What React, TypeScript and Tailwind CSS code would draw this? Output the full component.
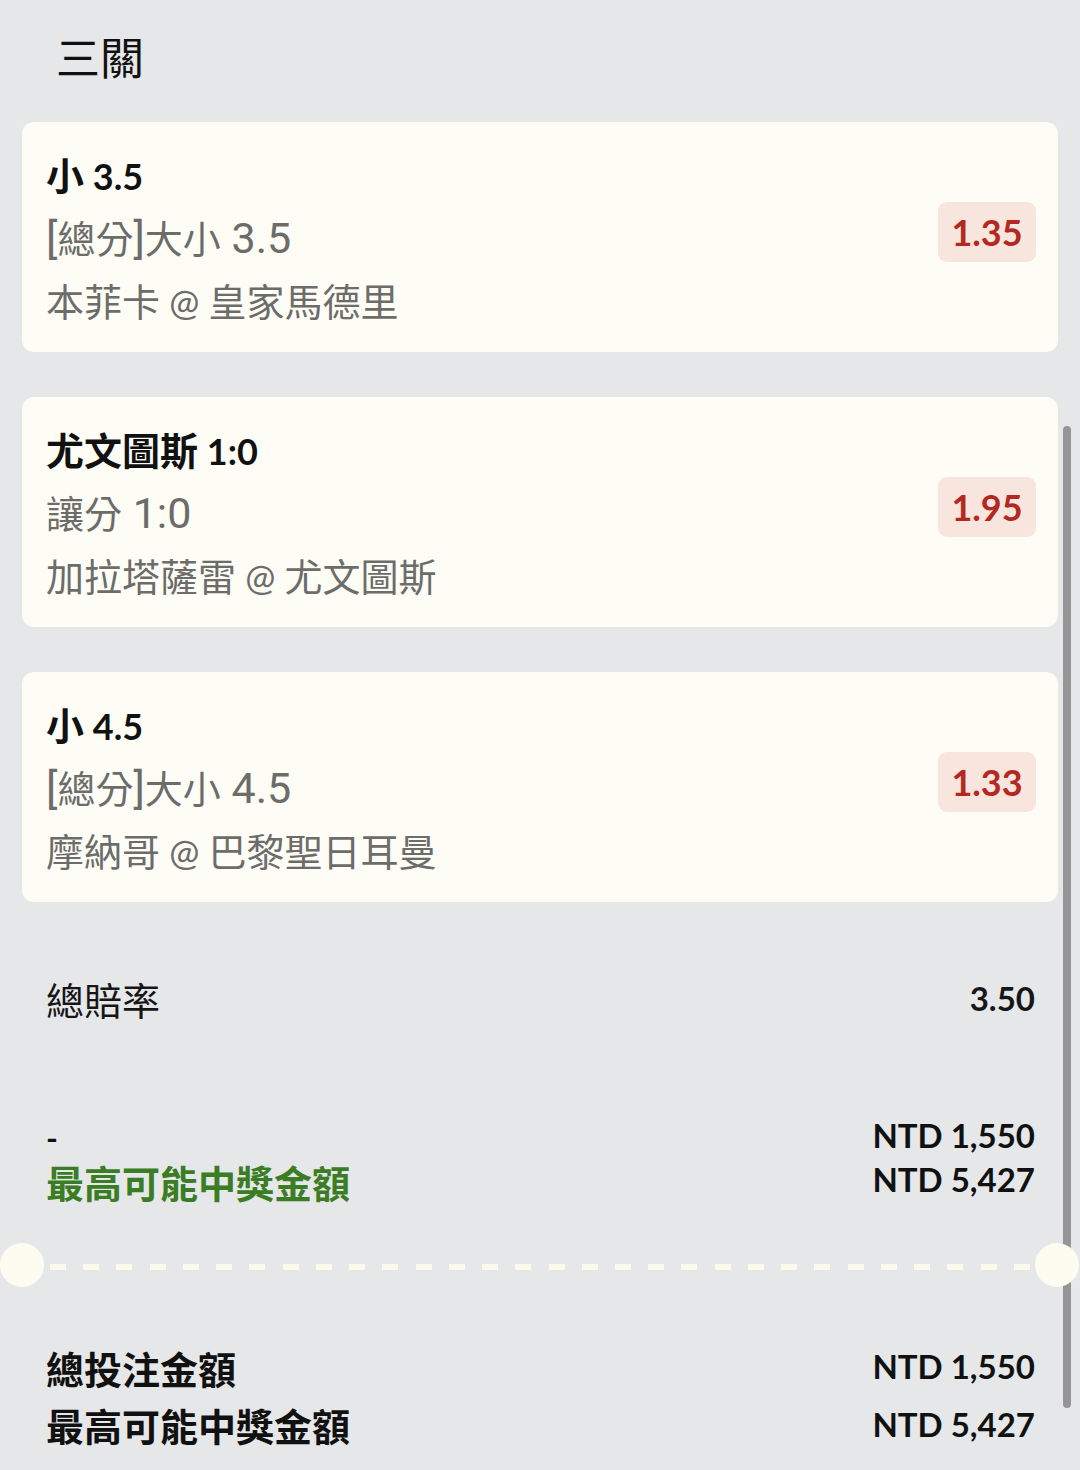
import React from "react";

const FONT = "font-['Lato','Noto_Sans_CJK_TC',sans-serif]";
const CJK_RE = /[\u3000-\u9fff\uff00-\uffef]/;

type Bet = { title: string; market: string; match: string; odds: string };

const bets: Bet[] = [
  { title: "小 3.5", market: "[總分]大小 3.5", match: "本菲卡 @ 皇家馬德里", odds: "1.35" },
  { title: "尤文圖斯 1:0", market: "讓分 1:0", match: "加拉塔薩雷 @ 尤文圖斯", odds: "1.95" },
  { title: "小 4.5", market: "[總分]大小 4.5", match: "摩納哥 @ 巴黎聖日耳曼", odds: "1.33" },
];

type Kind = "cjk" | "lat" | "rob";

function classify(text: string, sub: boolean): { kind: Kind; t: string }[] {
  const out: { kind: Kind; t: string }[] = [];
  const chars = Array.from(text);
  chars.forEach((ch, i) => {
    let kind: Kind;
    if (CJK_RE.test(ch)) kind = "cjk";
    else if (!sub) kind = "lat";
    else if (/[0-9.:\[\]]/.test(ch)) kind = "rob";
    else if (ch === " " && i + 1 < chars.length && /[0-9]/.test(chars[i + 1])) kind = "rob";
    else kind = "lat";
    const last = out[out.length - 1];
    if (last && last.kind === kind) last.t += ch;
    else out.push({ kind, t: ch });
  });
  return out;
}

function Mixed({ text, sub = false }: { text: string; sub?: boolean }) {
  return (
    <>
      {classify(text, sub).map((p, i) =>
        p.kind === "cjk" ? (
          <span key={i} className="font-['Noto_Sans_CJK_TC',sans-serif] text-[38px]">
            {p.t}
          </span>
        ) : p.kind === "rob" ? (
          <span key={i} className="font-['Roboto',sans-serif] text-[43px]">
            {p.t}
          </span>
        ) : (
          <span key={i} className="whitespace-pre">{p.t}</span>
        )
      )}
    </>
  );
}

function BetCard({ bet }: { bet: Bet }) {
  return (
    <div className="flex items-center justify-between rounded-[12px] bg-[#fdfdf5] pl-[24px] pr-[22px] pt-[20px] pb-[21px]">
      <div className="flex flex-col">
        <div className={`${FONT} h-[63px] text-[36px] leading-[63px] font-bold text-[#111111]`}>
          <Mixed text={bet.title} />
        </div>
        <div className={`${FONT} h-[63px] text-[36px] leading-[63px] text-[#6c6c6a]`}>
          <Mixed text={bet.market} sub />
        </div>
        <div className={`${FONT} h-[63px] text-[36px] leading-[63px] text-[#6c6c6a]`}>
          <Mixed text={bet.match} sub />
        </div>
      </div>
      <div className={`${FONT} mb-[10px] flex h-[60px] w-[98px] items-center justify-center rounded-[9px] bg-[#f7e5de] text-[36px] font-bold text-[#b3281f]`}>
        {bet.odds}
      </div>
    </div>
  );
}

export default function App() {
  const dashes = Array.from({ length: 30 }, (_, i) => i);
  return (
    <div className="relative h-[1470px] w-[1080px] overflow-hidden bg-[#e6e7e9]">
      <div className="h-[122px] pl-[56px] pt-[26px] font-['Noto_Sans_CJK_TC',sans-serif] text-[44px] leading-[60px] text-[#111111]">
        三關
      </div>

      <div className="flex flex-col gap-[45px] px-[22px]">
        {bets.map((b) => (
          <BetCard key={b.odds} bet={b} />
        ))}
      </div>

      <div className="mt-[71px] flex h-[50px] items-center justify-between pl-[46px] pr-[45px]">
        <span className="font-['Noto_Sans_CJK_TC',sans-serif] text-[38px] text-[#161616]">總賠率</span>
        <span className={`${FONT} mt-[2px] text-[33px] font-bold text-[#161616]`}>3.50</span>
      </div>

      <div className="mt-[91px] flex flex-col pl-[46px] pr-[45px]">
        <div className="flex h-[44px] items-center justify-between">
          <span className={`${FONT} mt-[4px] text-[32px] font-bold text-[#111111]`}>-</span>
          <span className={`${FONT} text-[33px] font-bold text-[#111111]`}>NTD 1,550</span>
        </div>
        <div className="flex h-[44px] items-center justify-between">
          <span className="mt-[2px] font-['Noto_Sans_CJK_TC',sans-serif] text-[38px] font-bold text-[#3b7d24]">最高可能中獎金額</span>
          <span className={`${FONT} text-[33px] font-bold text-[#111111]`}>NTD 5,427</span>
        </div>
      </div>

      <div className="relative mt-[41px] flex h-[44px] items-center">
        <div className="absolute left-0 top-0 z-10 h-[44px] w-[44px] rounded-full bg-[#fdfcf0]" />
        <div className="flex w-full items-center justify-between pl-[50px] pr-[50px]">
          {dashes.map((i) => (
            <span key={i} className="mt-[4px] h-[6px] w-[16px] bg-[#fcfaec]" />
          ))}
        </div>
        <div className="absolute left-[1035px] top-0 z-10 h-[44px] w-[44px] rounded-full bg-[#fdfcf0]" />
      </div>

      <div className="mt-[51px] flex flex-col pl-[46px] pr-[45px]">
        <div className="flex h-[58px] items-center justify-between">
          <span className="font-['Noto_Sans_CJK_TC',sans-serif] text-[38px] font-bold text-[#111111]">總投注金額</span>
          <span className={`${FONT} text-[33px] font-bold text-[#111111]`}>NTD 1,550</span>
        </div>
        <div className="flex h-[58px] items-center justify-between">
          <span className="mt-[-2px] font-['Noto_Sans_CJK_TC',sans-serif] text-[38px] font-bold text-[#111111]">最高可能中獎金額</span>
          <span className={`${FONT} text-[33px] font-bold text-[#111111]`}>NTD 5,427</span>
        </div>
      </div>

      <div className="absolute left-[1063px] top-[426px] h-[982px] w-[8px] rounded-full bg-[#959595]" />
    </div>
  );
}
